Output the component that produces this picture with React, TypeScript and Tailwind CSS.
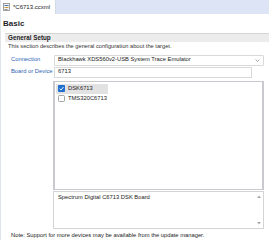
import { X } from "lucide-react";

function TabIcon() {
  return (
    <svg width="7" height="8" viewBox="0 0 7 8" className="shrink-0">
      <rect x="0.5" y="0.5" width="6" height="7" fill="#f4f4f4" stroke="#8a8a8a" strokeWidth="0.8" />
      <rect x="1.5" y="2" width="4" height="1" fill="#4a78b8" />
      <rect x="1.5" y="4" width="4" height="1" fill="#c89a3c" />
      <rect x="1.5" y="6" width="3" height="0.8" fill="#7a7a7a" />
    </svg>
  );
}

function Check({ checked }: { checked: boolean }) {
  if (checked) {
    return (
      <svg width="7" height="7" viewBox="0 0 7 7" className="shrink-0">
        <rect x="0" y="0" width="7" height="7" rx="1" fill="#1e6fd0" />
        <path d="M1.6 3.6 L3 5 L5.5 2" stroke="#fff" strokeWidth="0.9" fill="none" />
      </svg>
    );
  }
  return (
    <svg width="7" height="7" viewBox="0 0 7 7" className="shrink-0">
      <rect x="0.5" y="0.5" width="6" height="6" rx="1" fill="#fff" stroke="#8f8f8f" strokeWidth="0.8" />
    </svg>
  );
}

export default function App() {
  const devices = [
    { name: "DSK6713", checked: true },
    { name: "TMS320C6713", checked: false },
  ];

  return (
    <div
      className="w-[269px] h-[240px] bg-white overflow-hidden flex flex-col border-l border-[#dfe3ea] text-[#222]"
      style={{ fontFamily: '"Liberation Sans", Arial, sans-serif' }}
    >
      {/* tab strip */}
      <div className="h-[14px] flex shrink-0 bg-[#dde4f5] pt-[0px]">
        <div className="w-[55px] h-[14px] bg-white flex items-center pl-[2px] gap-[3px] border-r border-[#d4d9e6]">
          <TabIcon />
          <span className="text-[6px] leading-none">*C6713.ccxml</span>
          <X size={6} strokeWidth={1.5} className="ml-[3px] text-[#555]" />
        </div>
      </div>

      <div className="mt-[5px] h-[10px] pl-[2px] flex items-center text-[8px] font-bold leading-none text-[#1f1f1f]">
        Basic
      </div>

      {/* section */}
      <div className="mt-[4px] ml-[4px] h-[9px] bg-[#ececec] border-t border-[#d5d5d5] flex items-center pl-[3px] text-[6.3px] font-bold leading-none">
        General Setup
      </div>
      <div className="mt-[2px] h-[7px] pl-[7px] flex items-center text-[5.7px] leading-none text-[#333]">
        This section describes the general configuration about the target.
      </div>

      <div className="mt-[4px] grid grid-cols-[43px_1fr] gap-y-[1px] pl-[10px] pr-[5px] text-[5.8px] leading-none">
        <div className="h-[11px] flex items-center text-[#2d64b4]">Connection</div>
        <div className="h-[11px] border border-[#d9d9d9] rounded-[1px] flex items-center pl-[3px] pr-[3px]">
          <span className="flex-1 text-[#222]">Blackhawk XDS560v2-USB System Trace Emulator</span>
          <svg width="5" height="3" viewBox="0 0 5 3">
            <path d="M0.5 0.5 L2.5 2.5 L4.5 0.5" stroke="#8a8a8a" strokeWidth="0.7" fill="none" />
          </svg>
        </div>
        <div className="h-[11px] flex items-center text-[#2d64b4]">Board or Device</div>
        <div className="h-[11px] mr-[12px] border border-[#d9d9d9] flex items-center pl-[3px]">6713</div>
      </div>

      <div className="mt-[3px] ml-[52px] mr-[5px] h-[110px] border border-[#c9c9cf] border-l-2 border-r-2 pt-[2px] pl-[1px] text-[5.8px] leading-none">
        {devices.map((d) => (
          <div
            key={d.name}
            className={`w-[52px] h-[10px] flex items-center gap-[3px] pl-[2px] ${d.checked ? "bg-[#e2e2e2]" : ""}`}
          >
            <Check checked={d.checked} />
            <span>{d.name}</span>
          </div>
        ))}
      </div>

      <div className="mt-[1px] ml-[52px] mr-[5px] h-[39px] border border-[#d4d4d4] flex text-[5.8px] leading-none">
        <div className="flex-1 pl-[4px] pt-[3px]">Spectrum Digital C6713 DSK Board</div>
        <div className="w-[9px] flex flex-col items-center justify-between py-[3px]">
          <svg width="4" height="3" viewBox="0 0 4 3">
            <path d="M0 3 L2 0.5 L4 3 Z" fill="#a8a8a8" />
          </svg>
          <svg width="4" height="3" viewBox="0 0 4 3">
            <path d="M0 0 L2 2.5 L4 0 Z" fill="#a8a8a8" />
          </svg>
        </div>
      </div>

      <div className="mt-[3px] pl-[10px] h-[8px] flex items-center text-[5.8px] leading-none text-[#222]">
        Note: Support for more devices may be available from the update manager.
      </div>
    </div>
  );
}
